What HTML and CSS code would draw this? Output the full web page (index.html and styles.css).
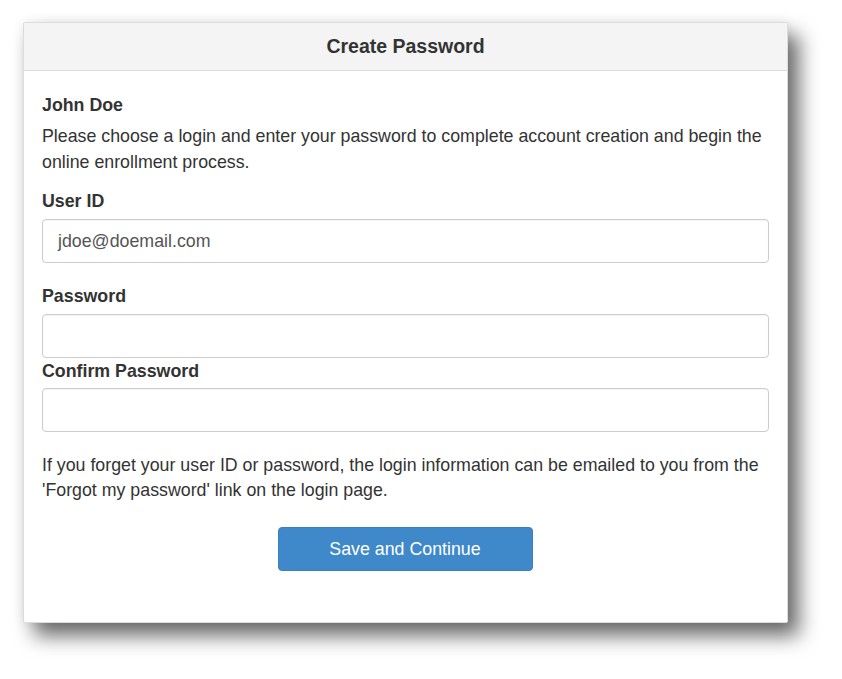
FILE: index.html
```html
<!DOCTYPE html>
<html>
<head>
<meta charset="utf-8">
<link rel="stylesheet" href="styles.css">
</head>
<body>
<div class="panel">
  <div class="panel-heading">Create Password</div>
  <div class="panel-body">
    <div class="name">John Doe</div>
    <p class="intro"><span class="line">Please choose a login and enter your password to complete account creation and begin the</span><br>online enrollment process.</p>
    <div class="group">
      <label class="label">User ID</label>
      <div class="input">jdoe@doemail.com</div>
    </div>
    <div class="group tight">
      <label class="label">Password</label>
      <div class="input"></div>
    </div>
    <div class="group last">
      <label class="label">Confirm Password</label>
      <div class="input"></div>
    </div>
    <p class="note">If you forget your user ID or password, the login information can be emailed to you from the 'Forgot my password' link on the login page.</p>
    <div class="actions">
      <button class="btn">Save and Continue</button>
    </div>
  </div>
</div>
</body>
</html>
```
FILE: styles.css
```css
html, body {
  margin: 0;
  padding: 0;
  background: #ffffff;
}
html {
  min-height: 100%;
}
body {
  font-family: "Liberation Sans", Arial, sans-serif;
  font-size: 17.8px;
  line-height: 1.42857;
  color: #333333;
  padding: 22px 0 80px 23px;
}
.panel {
  width: 763px;
  border: 1px solid #dcdcdc;
  border-radius: 2px;
  background: #ffffff;
  box-shadow: 11px 13px 20px rgba(0, 0, 0, 0.58), 0 0 12px rgba(0, 0, 0, 0.07);
}
.panel-heading {
  height: 48px;
  box-sizing: border-box;
  background: #f4f4f4;
  border-bottom: 1px solid #dddddd;
  text-align: center;
  font-weight: bold;
  font-size: 19.5px;
  line-height: 46px;
  color: #333333;
}
.panel-body {
  padding: 22px 18px 51px 18px;
}
.name {
  font-weight: bold;
  margin-bottom: 6px;
}
.intro {
  margin: 0 0 14px 0;
}
.intro .line {
  white-space: nowrap;
}
.group {
  margin-bottom: 21px;
}
.group.tight {
  margin-bottom: 0;
}
.label {
  display: block;
  font-weight: bold;
  margin-bottom: 4px;
}
.group.tight .label {
  margin-bottom: 5px;
}
.group.last .label {
  padding-top: 1px;
  margin-bottom: 3px;
}
.input {
  height: 44px;
  box-sizing: border-box;
  border: 1px solid #cccccc;
  border-radius: 4px;
  padding: 0 15px;
  line-height: 42px;
  color: #555555;
  box-shadow: inset 0 1px 1px rgba(0, 0, 0, 0.04);
}
.note {
  margin: 0 0 24px 0;
}
.actions {
  display: flex;
  justify-content: center;
}
.btn {
  width: 255px;
  height: 44px;
  border: 1px solid #3a80c0;
  border-radius: 4px;
  background: #3f88c9;
  color: #ffffff;
  font-family: "Liberation Sans", Arial, sans-serif;
  font-size: 17.8px;
  padding: 0;
  margin-left: -1px;
}
```
